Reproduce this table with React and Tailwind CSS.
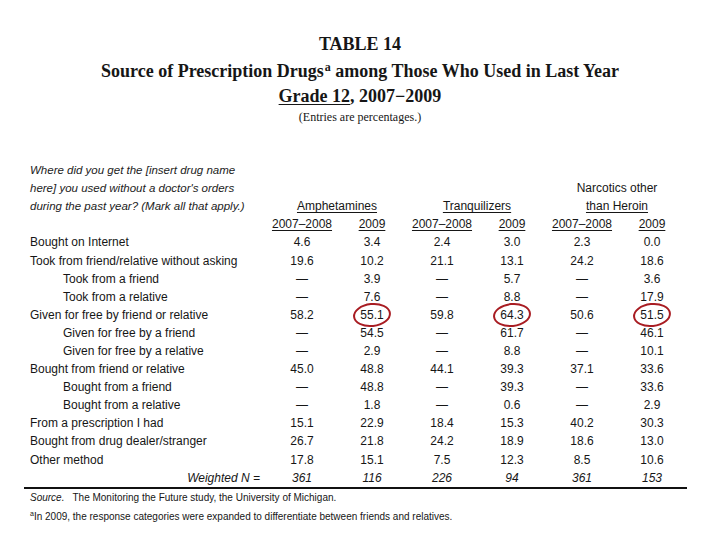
import React from "react";

const rows = [
  ["Bought on Internet", 0, ["4.6", "3.4", "2.4", "3.0", "2.3", "0.0"]],
  ["Took from friend/relative without asking", 0, ["19.6", "10.2", "21.1", "13.1", "24.2", "18.6"]],
  ["Took from a friend", 1, ["—", "3.9", "—", "5.7", "—", "3.6"]],
  ["Took from a relative", 1, ["—", "7.6", "—", "8.8", "—", "17.9"]],
  ["Given for free by friend or relative", 0, ["58.2", "55.1", "59.8", "64.3", "50.6", "51.5"], true],
  ["Given for free by a friend", 1, ["—", "54.5", "—", "61.7", "—", "46.1"]],
  ["Given for free by a relative", 1, ["—", "2.9", "—", "8.8", "—", "10.1"]],
  ["Bought from friend or relative", 0, ["45.0", "48.8", "44.1", "39.3", "37.1", "33.6"]],
  ["Bought from a friend", 1, ["—", "48.8", "—", "39.3", "—", "33.6"]],
  ["Bought from a relative", 1, ["—", "1.8", "—", "0.6", "—", "2.9"]],
  ["From a prescription I had", 0, ["15.1", "22.9", "18.4", "15.3", "40.2", "30.3"]],
  ["Bought from drug dealer/stranger", 0, ["26.7", "21.8", "24.2", "18.9", "18.6", "13.0"]],
  ["Other method", 0, ["17.8", "15.1", "7.5", "12.3", "8.5", "10.6"]],
];

const weighted = ["361", "116", "226", "94", "361", "153"];

const Cell = ({ value, circled }) => (
  <div className="relative flex items-center justify-center h-[18.1px]">
    {value}
    {circled && (
      <span className="absolute left-1/2 top-1/2 -translate-x-1/2 -translate-y-1/2 w-[38px] h-[24px] rounded-[50%] border-2 border-[#a81c22] -rotate-6" />
    )}
  </div>
);

const Years = () => (
  <>
    <div className="flex items-center justify-center h-[18.1px]">
      <span className="underline underline-offset-2">2007–2008</span>
    </div>
    <div className="flex items-center justify-center h-[18.1px]">
      <span className="underline underline-offset-2">2009</span>
    </div>
  </>
);

export default function App() {
  return (
    <div className="w-[720px] h-[540px] bg-white text-[#161616] overflow-hidden">
      {/* title block */}
      <div className="pt-[31px] flex flex-col items-center font-['Liberation_Serif',serif]">
        <h1 className="text-[18px] font-bold leading-[26px]">TABLE 14</h1>
        <h2 className="text-[18px] font-bold leading-[28px]">
          Source of Prescription Drugs<sup className="text-[12px] ml-[1px]">a</sup> among Those Who Used in Last Year
        </h2>
        <h3 className="text-[18px] font-bold leading-[22px]">
          <span className="underline underline-offset-2">Grade 12</span>, 2007−2009
        </h3>
        <p className="text-[12px] leading-[20px]">(Entries are percentages.)</p>
      </div>

      {/* table */}
      <div className="mt-[34px] ml-[24px] w-[663px] font-['Liberation_Sans',sans-serif] text-[12px]">
        <div className="pl-[6px] grid grid-cols-[237px_repeat(6,70px)] border-b-2 border-[#111]">
          <div className="row-span-3 italic text-[11.5px] leading-[18.1px] text-[#222] whitespace-nowrap">
            Where did you get the [insert drug name
            <br />
            here] you used without a doctor's orders
            <br />
            during the past year? (Mark all that apply.)
          </div>
          {/* row 1 */}
          <div className="col-span-6 h-[18.1px]" />
          {/* row 2 */}
          <div className="col-span-4 h-[18.1px]" />
          <div className="col-span-2 flex items-center justify-center h-[18.1px]">Narcotics other</div>
          {/* row 3 */}
          <div className="col-span-2 flex items-center justify-center h-[18.1px]">
            <span className="underline underline-offset-2">Amphetamines</span>
          </div>
          <div className="col-span-2 flex items-center justify-center h-[18.1px]">
            <span className="underline underline-offset-2">Tranquilizers</span>
          </div>
          <div className="col-span-2 flex items-center justify-center h-[18.1px]">
            <span className="underline underline-offset-2">than Heroin</span>
          </div>
          {/* row 4 */}
          <div className="h-[18.1px]" />
          <Years />
          <Years />
          <Years />

          {rows.map(([label, indent, values, circle], i) => (
            <React.Fragment key={i}>
              <div className={`flex items-center h-[18.1px] whitespace-nowrap ${indent ? "pl-[33px]" : ""}`}>
                {label}
              </div>
              {values.map((v, j) => (
                <Cell key={j} value={v} circled={circle && j % 2 === 1} />
              ))}
            </React.Fragment>
          ))}

          <div className="flex items-center justify-end pr-[7px] h-[18.1px] italic">Weighted N =</div>
          {weighted.map((w, j) => (
            <div key={j} className="flex items-center justify-center h-[18.1px] italic">
              {w}
            </div>
          ))}
        </div>

        <div className="pl-[6px] text-[10px] leading-[14px] mt-[2px]">
          <span className="italic">Source.</span>
          <span className="ml-[8px]">The Monitoring the Future study, the University of Michigan.</span>
        </div>
        <div className="pl-[6px] text-[10px] leading-[14px] mt-[5px]">
          <sup className="text-[7px]">a</sup>In 2009, the response categories were expanded to differentiate between friends and relatives.
        </div>
      </div>
    </div>
  );
}
